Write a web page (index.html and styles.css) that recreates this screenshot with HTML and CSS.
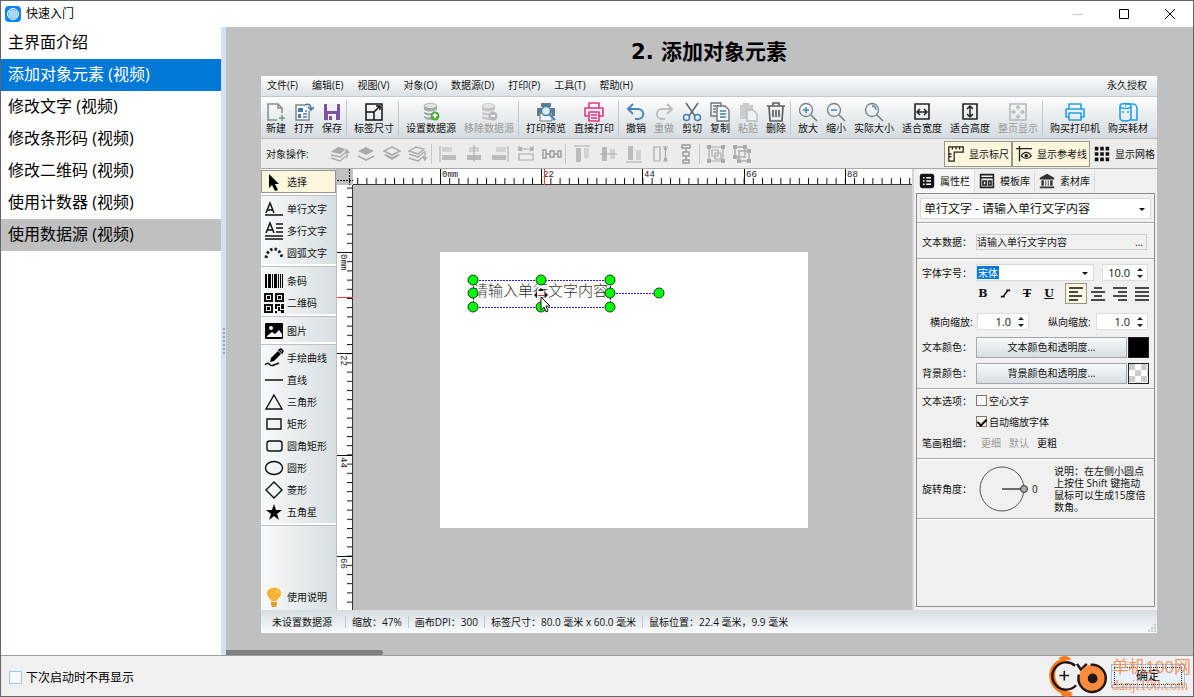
FILE: index.html
```html
<!DOCTYPE html>
<html lang="zh-CN">
<head>
<meta charset="utf-8">
<title>快速入门</title>
<link rel="stylesheet" href="styles.css">
</head>
<body>
<svg class="sprite" aria-hidden="true">
  <defs>
    <symbol id="new" viewBox="0 0 20 20"><path d="M11 18H2V2h10l4 4v5M12 2v4h4" fill="none" stroke="#8b8f92" stroke-width="1.6"/><path d="M16 13v6M13 16h6" stroke="#5f9f85" stroke-width="1.4"/></symbol>
    <symbol id="open" viewBox="0 0 20 20"><path d="M11 3H2v15h13V9" fill="#fff" stroke="#7d858b" stroke-width="1.5"/><path d="M4 6h5v4H4zM4 12h3v4H4z" fill="#3f7cb5"/><path d="M9 12h4M9 15h4M11 9h2" stroke="#3f7cb5" stroke-width="1.4"/><path d="M11 3c4-2 6 0 6 4M14 5l3 3 3-3" fill="none" stroke="#3f7cb5" stroke-width="1.6"/></symbol>
    <symbol id="save" viewBox="0 0 20 20"><path d="M2 2h16v16H2z" fill="#7e52a0"/><path d="M5 2h10v7H5zM6 12h8v6H6z" fill="#eef0f5"/><path d="M7 14h3v4H7z" fill="#7e52a0"/></symbol>
    <symbol id="size" viewBox="0 0 20 20"><path d="M2 2h16v16H2zM2 10h8v8M10 10l6-6M12 4h4v4" fill="none" stroke="#111" stroke-width="1.5"/></symbol>
    <symbol id="db" viewBox="0 0 20 20"><path d="M3 4v11c0 4 13 4 13 0V4z" fill="#a9adb0"/><path d="M3 8c0 3 13 3 13 0M3 12c0 3 13 3 13 0" stroke="#fff" stroke-width="1.4" fill="none"/><ellipse cx="9.500" cy="4" rx="6.500" ry="2.600" fill="#e0e2e4" stroke="#888" stroke-width=".6"/><circle cx="14" cy="14" r="4.500" fill="#51af3a"/><path d="M14 11l3 3h-2v2h-2v-2h-2z" fill="#fff"/></symbol>
    <symbol id="dboff" viewBox="0 0 20 20"><path d="M3 4v11c0 4 13 4 13 0V4z" fill="#c4c7ca"/><path d="M3 8c0 3 13 3 13 0M3 12c0 3 13 3 13 0" stroke="#f4f4f4" stroke-width="1.400" fill="none"/><ellipse cx="9.500" cy="4" rx="6.500" ry="2.600" fill="#e2e4e6" stroke="#bbb" stroke-width=".6"/><circle cx="14" cy="14" r="4.500" fill="#b5b8ba"/><path d="M12 14h4" stroke="#fff" stroke-width="1.600"/></symbol>
    <symbol id="preview" viewBox="0 0 20 20"><path d="M5 1h10v4H5zM1 6h18v8h-3v-3H4v3H1z" fill="#697983"/><path d="M4 11h12v8H4z" fill="#f5f8fa" stroke="#697983"/><circle cx="10" cy="9" r="4.500" fill="#d8ecfb" stroke="#3d86bd" stroke-width="1.500"/><path d="M13 12l6 6" stroke="#3d86bd" stroke-width="2"/></symbol>
    <symbol id="print" viewBox="0 0 20 20"><path d="M5 6V1h10v5M5 14H1V6h18v8h-4M5 10h10v9H5zM7 13h6M7 16h6" fill="none" stroke="currentColor" stroke-width="1.600" stroke-linejoin="round"/></symbol>
    <symbol id="undo" viewBox="0 0 20 20"><path d="M7 2L2 7l5 5M2 7h10c7 0 7 10 0 10H9" fill="none" stroke="#4b86ba" stroke-width="2"/></symbol>
    <symbol id="redo" viewBox="0 0 20 20"><path d="M13 2l5 5-5 5M18 7H8c-7 0-7 10 0 10h3" fill="none" stroke="#bbbfc1" stroke-width="2"/></symbol>
    <symbol id="cut" viewBox="0 0 20 20"><path d="M4 1l9 13M16 1L7 14" stroke="#5e666b" stroke-width="1.500"/><circle cx="4.500" cy="15.500" r="3" fill="none" stroke="#3e80b6" stroke-width="1.500"/><circle cx="15.500" cy="15.500" r="3" fill="none" stroke="#3e80b6" stroke-width="1.500"/></symbol>
    <symbol id="copy" viewBox="0 0 20 20"><path d="M7 14H1V1h10v3M3 4h5M3 7h3M3 10h3" fill="none" stroke="#6c7880" stroke-width="1.400"/><path d="M7 4h8l4 4v11H7z" fill="#f8fafb" stroke="#6c7880" stroke-width="1.400"/><path d="M10 9h6M10 12h6M10 15h6" stroke="#3e80b6" stroke-width="1.300"/></symbol>
    <symbol id="paste" viewBox="0 0 20 20"><path d="M2 3h13v14H2zM5 1h6v4H5z" fill="#c9cdd0"/><path d="M9 8h6l4 4v7H9z" fill="#f0f1f2" stroke="#b9bdc0" stroke-width="1.500"/></symbol>
    <symbol id="trash" viewBox="0 0 20 20"><path d="M1 4h18M7 4V1h6v3M3 4l1 15h12l1-15M7 8v7M10 8v7M13 8v7" fill="none" stroke="#5c6062" stroke-width="1.700"/></symbol>
    <symbol id="zin" viewBox="0 0 20 20"><circle cx="8" cy="8" r="6.500" fill="none" stroke="#777f84" stroke-width="1.300"/><path d="M13 13l6 6" stroke="#777f84" stroke-width="1.600"/><path d="M5 8h6M8 5v6" stroke="#3d86bd" stroke-width="1.500"/></symbol>
    <symbol id="zout" viewBox="0 0 20 20"><circle cx="8" cy="8" r="6.500" fill="none" stroke="#777f84" stroke-width="1.300"/><path d="M13 13l6 6" stroke="#777f84" stroke-width="1.600"/><path d="M5 8h6" stroke="#3d86bd" stroke-width="1.500"/></symbol>
    <symbol id="zreal" viewBox="0 0 20 20"><circle cx="8" cy="8" r="6.500" fill="none" stroke="#777f84" stroke-width="1.300"/><path d="M13 13l6 6" stroke="#777f84" stroke-width="1.600"/><path d="M8 4c3 0 4 2 4 4" fill="none" stroke="#3d86bd" stroke-width="1.400"/></symbol>
    <symbol id="fitw" viewBox="0 0 20 20"><path d="M3 2h14v15H3z" fill="none" stroke="#222" stroke-width="1.600"/><path d="M5 10h10M8 7l-3 3 3 3M12 7l3 3-3 3" fill="none" stroke="#222" stroke-width="1.500"/></symbol>
    <symbol id="fith" viewBox="0 0 20 20"><path d="M3 2h14v15H3z" fill="none" stroke="#222" stroke-width="1.600"/><path d="M10 4v11M7 7l3-3 3 3M7 12l3 3 3-3" fill="none" stroke="#222" stroke-width="1.500"/></symbol>
    <symbol id="fitp" viewBox="0 0 20 20"><path d="M2 2h16v16H2z" fill="none" stroke="#b4b8ba" stroke-width="1.500"/><path d="M10 4v4M10 12v4M4 10h4M12 10h4M8 6l2-2 2 2M8 14l2 2 2-2M6 8l-2 2 2 2M14 8l2 2-2 2" fill="none" stroke="#b4b8ba" stroke-width="1.300"/></symbol>
    <symbol id="printer" viewBox="0 0 20 20"><path d="M4 7V2h12v5M4 15H1V7h18v8h-3M4 11h12v7H4z" fill="none" stroke="#20a0e8" stroke-width="1.600" stroke-linejoin="round"/></symbol>
    <symbol id="roll" viewBox="0 0 20 20"><path d="M2 4v12c0 4 11 4 11 0V4M7 2h8c3 0 4 3 4 5v11h-6" fill="none" stroke="#20a0e8" stroke-width="1.600"/><ellipse cx="7.500" cy="4" rx="5.500" ry="2.500" fill="none" stroke="#20a0e8" stroke-width="1.500"/><path d="M7 4h1M4 10h2M9 10h2" stroke="#20a0e8" stroke-width="1.500"/></symbol>

    <symbol id="l1" viewBox="0 0 20 20"><path d="M1 8l7-5 8 2-6 5z" fill="#aaa"/><path d="M1 11l9 2 6-5M1 14l9 3 6-5M17 14V6m-2 3l2-3 2 3" fill="none" stroke="#aaa" stroke-width="1.400"/></symbol>
    <symbol id="l2" viewBox="0 0 20 20"><path d="M2 7l8-4 8 4-8 4z" fill="#aaa"/><path d="M2 12l8 4 8-4" fill="none" stroke="#aaa" stroke-width="1.600"/></symbol>
    <symbol id="l3" viewBox="0 0 20 20"><path d="M2 7l8-4 8 4-8 4z" fill="none" stroke="#aaa" stroke-width="1.500"/><path d="M2 11l8 5 8-5-2-1-6 3-6-3z" fill="#aaa"/></symbol>
    <symbol id="l4" viewBox="0 0 20 20"><path d="M1 7l7-4 8 2-6 5zM1 10l9 3 6-5M1 14l9 3 6-5" fill="none" stroke="#aaa" stroke-width="1.400"/><path d="M17 7v9m-2-3l2 3 2-3" stroke="#aaa" fill="none" stroke-width="1.300"/></symbol>
    <symbol id="al" viewBox="0 0 20 20"><path d="M2 2v16" stroke="#aaa"/><path d="M4 3h10v5H4z" fill="#d2d2d2"/><path d="M4 11h14v5H4z" fill="#bbb"/></symbol>
    <symbol id="ac" viewBox="0 0 20 20"><path d="M5 3h10v5H5z" fill="#d2d2d2"/><path d="M3 11h14v5H3z" fill="#bbb"/><path d="M10 1v17" stroke="#aaa"/></symbol>
    <symbol id="ar" viewBox="0 0 20 20"><path d="M18 2v16" stroke="#aaa"/><path d="M6 3h10v5H6z" fill="#d2d2d2"/><path d="M2 11h14v5H2z" fill="#bbb"/></symbol>
    <symbol id="sw" viewBox="0 0 20 20"><path d="M3 10h14v6H3zM3 2v5M17 2v5M3 5h14M6 3L3 5l3 2M14 3l3 2-3 2" fill="none" stroke="#aaa" stroke-width="1.200"/></symbol>
    <symbol id="sh" viewBox="0 0 20 20"><path d="M4 3h6v14H4zM13 3h5M13 17h5M15.500 3v14M14 6l1.500-3L17 6M14 14l1.500 3 1.500-3" fill="none" stroke="#aaa" stroke-width="1.200"/></symbol>
    <symbol id="dh" viewBox="0 0 20 20"><path d="M1 6h3v8H1zM8 7h4v6H8zM16 7h3v6h-3zM4 10h4M12 10h4" fill="none" stroke="#999" stroke-width="1.400"/></symbol>
    <symbol id="grp" viewBox="0 0 20 20"><path d="M3 3h14v14H3zM6 6h6v6H6zM9 9h6v6H9z" fill="none" stroke="#aaa" stroke-width="1.200"/><path d="M1 1h4v4H1zM15 1h4v4h-4zM1 15h4v4H1zM15 15h4v4h-4z" fill="#aaa"/></symbol>
    <symbol id="ugrp" viewBox="0 0 20 20"><path d="M3 3h10v10H3zM7 7h10v10H7z" fill="none" stroke="#aaa" stroke-width="1.400"/><path d="M1 1h4v4H1zM11 1h4v4h-4zM1 11h4v4H1zM15 5h4v4h-4zM5 15h4v4H5zM15 15h4v4h-4z" fill="#aaa"/></symbol>
    <symbol id="rul" viewBox="0 0 20 20"><path d="M2 2h16v6H8v10H2zM6 2v3M10 2v3M14 2v3M2 10h3M2 13h3" fill="none" stroke="#222" stroke-width="1.400"/></symbol>
    <symbol id="guide" viewBox="0 0 20 20"><path d="M1 4h18M5 1v17" stroke="#222" stroke-width="1.500"/><path d="M7 12c3-5 8-5 11 0-3 4-8 4-11 0z" fill="none" stroke="#222" stroke-width="1.300"/><circle cx="12.500" cy="12" r="2" fill="#222"/></symbol>
    <symbol id="grid" viewBox="0 0 20 20"><path d="M2 2h4v4H2zM8 2h4v4H8zM14 2h4v4h-4zM2 8h4v4H2zM8 8h4v4H8zM14 8h4v4h-4zM2 14h4v4H2zM8 14h4v4H8zM14 14h4v4h-4z" fill="#111"/></symbol>

    <symbol id="arrow" viewBox="0 0 20 20"><path d="M5 2v14l3-3 3 6 3-1-3-6h4z"/></symbol>
    <symbol id="tline" viewBox="0 0 20 20"><path d="M2 14L6 4l4 10M3.500 11h5" fill="none" stroke="#111" stroke-width="1.500"/><path d="M1 16h18" stroke="#111" stroke-width="1.500"/></symbol>
    <symbol id="tmulti" viewBox="0 0 20 20"><path d="M2 12L6 2l4 10M3 9h6M12 3h7M12 7h7M12 11h7M1 15h18M1 18h18" fill="none" stroke="#111" stroke-width="1.500"/></symbol>
    <symbol id="tarc" viewBox="0 0 20 20"><path d="M2 15C4 3 16 3 18 15" fill="none" stroke="#222" stroke-width="3" stroke-dasharray="2.500 2"/></symbol>
    <symbol id="bar" viewBox="0 0 20 20"><path d="M1 3h2v14H1zM4 3h3v14H4zM8 3h1v14H8zM10 3h3v14h-3zM14 3h1v14h-1zM16 3h1v14h-1zM18 3h1v14h-1z"/></symbol>
    <symbol id="qr" viewBox="0 0 20 20"><path d="M1 1h7v7H1zM12 1h7v7h-7zM1 12h7v7H1z" fill="none" stroke="#111" stroke-width="2"/><path d="M3 3h3v3H3zM14 3h3v3h-3zM3 14h3v3H3zM11 11h5v2h-3v3h-2zM17 11h3v5h-3zM14 14h2v3h4v3h-3v-2h-3zM11 18h2v2h-2z"/></symbol>
    <symbol id="img" viewBox="0 0 20 20"><rect x="1" y="2" width="18" height="16" rx="1"/><path d="M3 15l5-4 3 2 4-4 3 4v3H3z" fill="#f3f5f6"/><circle cx="7" cy="7" r="2" fill="#f3f5f6"/></symbol>
    <symbol id="pen" viewBox="0 0 20 20"><path d="M7 10l7-7 3 3-7 7-4 1z"/><path d="M15 2l2-1 2 2-1 2zM1 17c5-5 4 3 9 0l5-2" stroke="#111" stroke-width="1.500" fill="none"/></symbol>
    <symbol id="line" viewBox="0 0 20 20"><path d="M1 10h18" stroke="#111" stroke-width="1.500"/></symbol>
    <symbol id="tri" viewBox="0 0 20 20"><path d="M10 3l8 14H2z" fill="none" stroke="#111" stroke-width="1.400"/></symbol>
    <symbol id="rect" viewBox="0 0 20 20"><path d="M3 5h14v10H3z" fill="none" stroke="#111" stroke-width="1.400"/></symbol>
    <symbol id="rrect" viewBox="0 0 20 20"><rect x="3" y="5" width="15" height="10" rx="2.500" fill="none" stroke="#111" stroke-width="1.400"/></symbol>
    <symbol id="oval" viewBox="0 0 20 20"><ellipse cx="10" cy="10" rx="8.500" ry="6.500" fill="none" stroke="#111" stroke-width="1.400"/></symbol>
    <symbol id="dia" viewBox="0 0 20 20"><path d="M10 2l8 8-8 8-8-8z" fill="none" stroke="#111" stroke-width="1.400"/></symbol>
    <symbol id="star" viewBox="0 0 20 20"><path d="M10 2l2 6h6l-5 4 2 6-5-4-5 4 2-6-5-4h6z"/></symbol>
    <symbol id="bulb" viewBox="0 0 20 20"><path d="M7 14c0-3-4-3-4-8 0-7 14-7 14 0 0 5-4 5-4 8z" fill="#f9b233"/><path d="M7 15h6v2l-1 3H8l-1-3z" fill="#e39a2c"/><path d="M12 3c2 1 2 2 2 3" fill="none" stroke="#ffe3a4" stroke-width="1.200"/></symbol>

    <symbol id="props" viewBox="0 0 20 20"><rect x="1" y="1" width="18" height="18" rx="3" fill="#151515"/><path d="M5 6h2M5 10h2M5 14h2M9 6h6M9 10h6M9 14h6" stroke="#fff" stroke-width="2"/></symbol>
    <symbol id="tmpl" viewBox="0 0 20 20"><path d="M2 2h16v16H2zM2 6h16M5 10h4v5H5zM12 10h3v5h-3z" fill="none" stroke="#222" stroke-width="2"/></symbol>
    <symbol id="bank" viewBox="0 0 20 20"><path d="M10 1l9 5v2H1V6zM3 9h3v7H3zM8 9h1v7H8zM11 9h1v7h-1zM14 9h3v7h-3zM1 17h18v2H1z" fill="#333"/></symbol>
    <symbol id="updown" viewBox="0 0 6 12"><path d="M0 4l3-3 3 3zM0 8l3 3 3-3z" fill="#222"/></symbol>
  </defs>
</svg>

<div class="window">
  <header class="titlebar">
    <svg class="logo" viewBox="0 0 16 16"><rect width="16" height="16" rx="4" fill="#0a84f0"/><circle cx="8" cy="8" r="5.500" fill="#5fb0f7" stroke="#fff" stroke-width="1"/><path d="M5 5v6M7 4v8M9 4v8M11 5v6" stroke="#fff"/></svg>
    <span class="caption">快速入门</span>
    <button class="winbtn" aria-label="最小化"><svg viewBox="0 0 12 12"><path d="M1 6.500h10" stroke="#c8c8c8"/></svg></button>
    <button class="winbtn" aria-label="最大化"><svg viewBox="0 0 12 12"><path d="M1.500 1.500h9v9h-9z" fill="none" stroke="#000"/></svg></button>
    <button class="winbtn" aria-label="关闭"><svg viewBox="0 0 12 12"><path d="M1 1l10 10M11 1L1 11" stroke="#000"/></svg></button>
  </header>

  <div class="body">
    <nav class="topics">
      <a href="#">主界面介绍</a>
      <a href="#" class="current">添加对象元素 (视频)</a>
      <a href="#">修改文字 (视频)</a>
      <a href="#">修改条形码 (视频)</a>
      <a href="#">修改二维码 (视频)</a>
      <a href="#">使用计数器 (视频)</a>
      <a href="#" class="hover">使用数据源 (视频)</a>
    </nav>
    <div class="splitter"><i></i></div>

    <main class="stage">
      <h1>2. 添加对象元素</h1>
      <div class="app">
        <div class="menubar">
          <button>文件(F)</button><button>编辑(E)</button><button>视图(V)</button><button>对象(O)</button><button>数据源(D)</button><button>打印(P)</button><button>工具(T)</button><button>帮助(H)</button>
          <button class="license">永久授权</button>
        </div>

        <div class="toolbar">
          <button><svg><use href="#new"/></svg>新建</button>
          <button><svg><use href="#open"/></svg>打开</button>
          <button><svg><use href="#save"/></svg>保存</button>
          <i class="sep"></i>
          <button><svg><use href="#size"/></svg>标签尺寸</button>
          <i class="sep"></i>
          <button><svg><use href="#db"/></svg>设置数据源</button>
          <button disabled><svg><use href="#dboff"/></svg>移除数据源</button>
          <i class="sep"></i>
          <button><svg><use href="#preview"/></svg>打印预览</button>
          <button><svg class="pink"><use href="#print"/></svg>直接打印</button>
          <i class="sep"></i>
          <button><svg><use href="#undo"/></svg>撤销</button>
          <button disabled><svg><use href="#redo"/></svg>重做</button>
          <button><svg><use href="#cut"/></svg>剪切</button>
          <button><svg><use href="#copy"/></svg>复制</button>
          <button disabled><svg><use href="#paste"/></svg>粘贴</button>
          <button><svg><use href="#trash"/></svg>删除</button>
          <i class="sep"></i>
          <button><svg><use href="#zin"/></svg>放大</button>
          <button><svg><use href="#zout"/></svg>缩小</button>
          <button><svg><use href="#zreal"/></svg>实际大小</button>
          <button><svg><use href="#fitw"/></svg>适合宽度</button>
          <button><svg><use href="#fith"/></svg>适合高度</button>
          <button disabled><svg><use href="#fitp"/></svg>整页显示</button>
          <i class="sep"></i>
          <button><svg><use href="#printer"/></svg>购买打印机</button>
          <button><svg><use href="#roll"/></svg>购买耗材</button>
        </div>

        <div class="objectbar">
          <span class="oblabel">对象操作:</span>
          <button aria-label="置顶"><svg><use href="#l1"/></svg></button>
          <button aria-label="上移"><svg><use href="#l2"/></svg></button>
          <button aria-label="下移"><svg><use href="#l3"/></svg></button>
          <button aria-label="置底"><svg><use href="#l4"/></svg></button>
          <i class="sep"></i>
          <button aria-label="左对齐"><svg><use href="#al"/></svg></button>
          <button aria-label="水平居中"><svg><use href="#ac"/></svg></button>
          <button aria-label="右对齐"><svg><use href="#ar"/></svg></button>
          <button aria-label="等宽"><svg><use href="#sw"/></svg></button>
          <button aria-label="水平分布"><svg><use href="#dh"/></svg></button>
          <i class="sep"></i>
          <button aria-label="顶对齐"><svg class="turn"><use href="#al"/></svg></button>
          <button aria-label="垂直居中"><svg class="turn"><use href="#ac"/></svg></button>
          <button aria-label="底对齐"><svg class="turn"><use href="#ar"/></svg></button>
          <button aria-label="等高"><svg><use href="#sh"/></svg></button>
          <button aria-label="垂直分布"><svg class="turn"><use href="#dh"/></svg></button>
          <i class="sep"></i>
          <button aria-label="组合"><svg><use href="#grp"/></svg></button>
          <button aria-label="取消组合"><svg><use href="#ugrp"/></svg></button>
          <div class="toggles">
            <button class="on"><svg><use href="#rul"/></svg>显示标尺</button>
            <button class="on"><svg><use href="#guide"/></svg>显示参考线</button>
            <button class="last"><svg><use href="#grid"/></svg>显示网格</button>
          </div>
        </div>

        <div class="work">
          <div class="tools">
            <button class="picked"><svg><use href="#arrow"/></svg>选择</button>
            <i></i>
            <button><svg><use href="#tline"/></svg>单行文字</button>
            <button><svg><use href="#tmulti"/></svg>多行文字</button>
            <button><svg><use href="#tarc"/></svg>圆弧文字</button>
            <i class="tall"></i>
            <button><svg><use href="#bar"/></svg>条码</button>
            <button><svg><use href="#qr"/></svg>二维码</button>
            <i class="tall"></i>
            <button><svg><use href="#img"/></svg>图片</button>
            <i></i>
            <button><svg><use href="#pen"/></svg>手绘曲线</button>
            <button><svg><use href="#line"/></svg>直线</button>
            <button><svg><use href="#tri"/></svg>三角形</button>
            <button><svg><use href="#rect"/></svg>矩形</button>
            <button><svg><use href="#rrect"/></svg>圆角矩形</button>
            <button><svg><use href="#oval"/></svg>圆形</button>
            <button><svg><use href="#dia"/></svg>菱形</button>
            <button><svg><use href="#star"/></svg>五角星</button>
            <i class="tall"></i>
            <button class="help"><svg><use href="#bulb"/></svg>使用说明</button>
          </div>

          <div class="board">
            <svg class="corner"><path d="M0 11.500h16M12.500 0v16" stroke="#111" stroke-dasharray="2 1"/></svg>
            <svg class="hruler">
              <defs><pattern id="ht" x="87" width="9.200" height="16" patternUnits="userSpaceOnUse"><path d="M.5 9v7" stroke="#111"/></pattern></defs>
              <rect width="100%" height="16" fill="#fff"/>
              <rect width="100%" height="16" fill="url(#ht)"/>
              <path d="M87.500 0v16M188.500 0v16M289.500 0v16M391.500 0v16M492.500 0v16" stroke="#111"/>
              <rect y="15" width="100%" height="1" fill="#333"/>
              <text x="89" y="8">0mm</text><text x="190" y="8">22</text><text x="291" y="8">44</text><text x="393" y="8">66</text><text x="494" y="8">88</text>
              <path d="M191.500 0v16" stroke="#f33"/>
            </svg>
            <svg class="vruler">
              <defs><pattern id="vt" y="67" width="16" height="9.200" patternUnits="userSpaceOnUse"><path d="M10 .5h6" stroke="#111"/></pattern></defs>
              <rect width="16" height="100%" fill="#fff"/>
              <rect width="16" height="100%" fill="url(#vt)"/>
              <path d="M0 67.500h16M0 168.500h16M0 270.500h16M0 371.500h16" stroke="#111"/>
              <rect x="15" width="1" height="100%" fill="#333"/>
              <text transform="translate(4 69) rotate(90)">0mm</text><text transform="translate(4 170) rotate(90)">22</text><text transform="translate(4 272) rotate(90)">44</text><text transform="translate(4 373) rotate(90)">66</text>
              <path d="M0 112.500h16" stroke="#f33"/>
            </svg>
            <div class="canvas">
              <div class="label">
                <span class="sample">请输入单行文字内容</span>
                <svg class="selection" viewBox="0 0 220 50">
                  <path d="M13 13.500h137M13 40.500h137M13.500 13v27M150.500 13v27M150 26.500h48" fill="none" stroke="#2222dd" stroke-dasharray="2 1"/>
                  <g fill="#0f0" stroke="#154015"><circle cx="13" cy="13" r="5"/><circle cx="81" cy="13" r="5"/><circle cx="150" cy="13" r="5"/><circle cx="13" cy="26" r="5"/><circle cx="150" cy="26" r="5"/><circle cx="13" cy="40" r="5"/><circle cx="81" cy="40" r="5"/><circle cx="150" cy="40" r="5"/><circle cx="199" cy="26" r="5"/></g>
                  <path d="M74 28l3-3v6zM88 28l-3-3v6zM81 21l-3 3h6z" fill="#111"/>
                  <path d="M78 28.500h7" stroke="#e22"/>
                  <path d="M81 30v13l3-3 2 5 2-1-2-5h4z" fill="#fff" stroke="#111"/>
                </svg>
              </div>
            </div>
          </div>

          <aside class="panel">
            <div class="tabs">
              <button class="active"><svg><use href="#props"/></svg>属性栏</button>
              <button><svg><use href="#tmpl"/></svg>模板库</button>
              <button><svg><use href="#bank"/></svg>素材库</button>
            </div>
            <div class="props">
              <section class="pick">
                <span class="combo big"><select aria-label="对象"><option>单行文字 - 请输入单行文字内容</option></select></span>
              </section>
              <section class="data">
                <div class="row"><label for="txt">文本数据：</label><span class="field"><input id="txt" value="请输入单行文字内容"><button aria-label="更多">...</button></span></div>
              </section>
              <section class="font">
                <div class="row"><label for="fam">字体字号：</label><span class="combo fam"><select id="fam"><option>宋体</option></select></span><span class="spin size"><input aria-label="字号" value="10.0"><svg><use href="#updown"/></svg></span></div>
                <div class="row format">
                  <button class="b">B</button><button class="i" aria-label="斜体"><svg viewBox="0 0 14 14"><path d="M8 3h5M1 11h5M4 11l6-8" stroke="#111" stroke-width="2"/></svg></button><button class="s">T</button><button class="u">U</button>
                  <button class="al on" aria-label="左对齐"><svg viewBox="0 0 16 16"><path d="M1 2h14M1 6h9M1 10h13M1 14h9" stroke="#111" stroke-width="1.700"/></svg></button>
                  <button class="al" aria-label="居中"><svg viewBox="0 0 16 16"><path d="M4 2h8M1 6h14M4 10h8M1 14h14" stroke="#111" stroke-width="1.700"/></svg></button>
                  <button class="al" aria-label="右对齐"><svg viewBox="0 0 16 16"><path d="M1 2h14M6 6h9M1 10h14M6 14h9" stroke="#111" stroke-width="1.700"/></svg></button>
                  <button class="al" aria-label="两端对齐"><svg viewBox="0 0 16 16"><path d="M1 2h14M1 6h14M1 10h14M1 14h14" stroke="#111" stroke-width="1.700"/></svg></button>
                </div>
                <div class="row scale"><label for="sx">横向缩放:</label><span class="spin"><input id="sx" value="1.0"><svg><use href="#updown"/></svg></span><label for="sy" class="second">纵向缩放:</label><span class="spin"><input id="sy" value="1.0"><svg><use href="#updown"/></svg></span></div>
                <div class="row color"><span class="lab">文本颜色：</span><button class="wide">文本颜色和透明度...</button><i class="swatch"></i></div>
                <div class="row color"><span class="lab">背景颜色：</span><button class="wide">背景颜色和透明度...</button><i class="swatch clear"></i></div>
              </section>
              <section class="opts">
                <div class="row"><span class="lab">文本选项：</span><label class="tick"><input type="checkbox">空心文字</label></div>
                <div class="row"><span class="lab"></span><label class="tick"><input type="checkbox" checked>自动缩放字体</label></div>
                <div class="row weight"><span class="lab">笔画粗细：</span><button disabled>更细</button><button disabled>默认</button><button>更粗</button></div>
              </section>
              <section class="rotate">
                <div class="row"><span class="lab">旋转角度：</span>
                  <svg class="dial" viewBox="0 0 52 48"><circle cx="26" cy="24" r="22" fill="none" stroke="#555"/><path d="M26 24h20" stroke="#222" stroke-width="1.300"/><circle cx="48" cy="24" r="3.500" fill="#aaa" stroke="#333"/></svg>
                  <output>0</output>
                  <p>说明：在左侧小圆点上按住 Shift 键拖动鼠标可以生成15度倍数角。</p>
                </div>
              </section>
            </div>
          </aside>
        </div>

        <div class="status">
          <span class="src">未设置数据源</span><span>缩放：47%</span><span>画布DPI：300</span><span>标签尺寸：80.0 毫米 x 60.0 毫米</span><span>鼠标位置：22.4 毫米，9.9 毫米</span>
          <svg class="grip" viewBox="0 0 8 8"><path d="M6 1h2M3 4h2M6 4h2M0 7h2M3 7h2M6 7h2" stroke="#999"/></svg>
        </div>
      </div>
      <div class="scroll"></div>
    </main>
  </div>

  <footer class="footer">
    <label class="again"><input type="checkbox">下次启动时不再显示</label>
    <button class="ok">确定</button>
    <div class="mark">
      <svg viewBox="0 0 64 42"><path d="M20 2C-4 4-4 38 24 41l2-4C4 34 4 8 20 6z" fill="#ff7a1a"/><path d="M12 3c3-4 11-4 13 1-4 0-9 0-13-1zM14 39c3 4 10 4 13 0z" fill="#ff7a1a"/><path d="M30 30A14 14 0 1 1 29 10M31 8l4 6 6-6" fill="none" stroke="#201616" stroke-width="2.500"/><path d="M13 20h10M18 15v10" stroke="#201616" stroke-width="1.600"/><circle cx="47" cy="23" r="14" fill="#ff8c3c"/><path d="M45 9a14 14 0 1 1-12 10" fill="none" stroke="#201616" stroke-width="2.500"/><circle cx="47" cy="23" r="5" fill="#201616"/></svg>
      <div class="words"><b>单机100网</b><span>danji100.com</span></div>
    </div>
  </footer>
</div>
</body>
</html>
```
FILE: styles.css
```css
* { box-sizing: border-box; }
body {
  margin: 0;
  font: 12px/16px "Open Sans", "Noto Sans CJK SC", sans-serif;
  color: #111;
}
button, input, select {
  font: inherit;
  color: inherit;
  margin: 0;
  padding: 0;
  border: 0;
  border-radius: 0;
  background: none;
  appearance: none;
}
button { white-space: nowrap; }
svg { display: block; flex: none; }
.sprite { position: absolute; width: 0; height: 0; }

.window {
  display: flex;
  flex-direction: column;
  min-height: 100vh;
  border: 1px solid #62666c;
  background: #fff;
}
.titlebar { display: flex; align-items: center; height: 26px; padding-left: 4px; }
.logo { width: 16px; height: 16px; margin-right: 5px; }
.caption { flex: 1; color: #000; }
.winbtn { width: 46px; height: 24px; display: grid; place-items: center; }
.winbtn svg { width: 12px; height: 12px; }

.body { flex: 1; display: flex; }
.topics { width: 220px; flex: none; background: #fff; }
.topics a {
  display: block;
  padding: 0 7px 2px;
  font-size: 16px;
  line-height: 30px;
  color: #000;
  text-decoration: none;
}
.topics .current { background: #0078d7; color: #fff; }
.topics .hover { background: #c0c0c0; }
.splitter { width: 5px; display: grid; place-items: center; background: #d3e0f3; }
.splitter i { width: 2px; height: 27px; background: repeating-linear-gradient(#8fa6c8 0 2px, transparent 2px 4px); }

.stage {
  flex: 1;
  min-width: 0;
  display: flex;
  flex-direction: column;
  padding: 0 36px 0 35px;
  background: #c0c0c0;
  position: relative;
}
h1 {
  margin: 0;
  padding-top: 9px;
  font: bold 21px/32px "DejaVu Sans", "Noto Sans CJK SC", sans-serif;
  height: 49px;
  text-align: center;
  color: #000;
}
.scroll { position: absolute; left: 0; bottom: 0; width: 157px; height: 5px; background: #808080; border-radius: 0 3px 3px 0; }

.app {
  flex: 1;
  display: flex;
  flex-direction: column;
  margin-bottom: 22px;
  background: #f0f0f0;
  font-size: 10px;
  line-height: 12px;
}
.menubar {
  display: flex;
  align-items: center;
  gap: 14px;
  height: 21px;
  padding: 0 10px 2px 6px;
  background: linear-gradient(#fcfdfd, #dbe1e5);
  border-bottom: 1px solid #c3c8cb;
}
.license { margin-left: auto; }
.toolbar {
  display: flex;
  height: 42px;
  padding: 4px 0 0 1px;
  background: linear-gradient(#fcfdfe, #d4dbe0);
  border-bottom: 1px solid #b8bdc1;
}
.toolbar button { padding: 0 4px; height: 34px; flex: none; }
.toolbar svg { width: 20px; height: 20px; margin: 0 auto; }
.toolbar button:disabled { color: #999; }
.pink { color: #e3357f; }
.sep { flex: none; width: 4px; height: 34px; border-left: 1px solid #c2c6c9; }
.objectbar { display: flex; align-items: center; height: 30px; padding-left: 5px; background: #ececec; border-bottom: 1px solid #a8abad; }
.oblabel { width: 61px; }
.objectbar > button { width: 26px; height: 24px; display: grid; place-items: center; }
.objectbar > button svg { width: 20px; height: 20px; }
.objectbar .sep { height: 20px; }
.turn { transform: rotate(90deg); }
.toggles { display: flex; margin-left: auto; padding-right: 2px; }
.toggles button { display: flex; align-items: center; gap: 4px; height: 26px; padding: 0 2px; border: 1px solid transparent; }
.toggles .on { background: #fcf6dc; border-color: #96958a; }
.toggles .last { padding-right: 0; border-right: 0; }
.toggles svg { width: 18px; height: 18px; }

.work { flex: 1; display: grid; grid-template-columns: 76px 1fr 245px; }
.tools { display: flex; flex-direction: column; padding-top: 1px; background: linear-gradient(90deg, #f8fafa, #d7dee2); border-right: 1px solid #b9bec2; }
.tools button { display: flex; align-items: center; gap: 3px; height: 22px; padding-left: 3px; }
.tools svg { width: 20px; height: 20px; }
.tools i { height: 5px; flex: none; border-top: 2px solid #fff; box-shadow: inset 0 1px #bcc1c4; }
.tools .tall { height: 6px; }
.tools .picked { height: 23px; background: #fcf6dc; border: 1px solid #96958a; padding-left: 2px; }
.tools .help { margin: auto 0 2px; }

.board { display: grid; grid-template: 16px 1fr / 16px 1fr; min-width: 0; background: #c0c0c0; }
.board text { font: 9px "Liberation Mono", monospace; fill: #222; }
.corner { width: 16px; height: 16px; }
.hruler { width: 100%; height: 16px; }
.vruler { width: 16px; height: 100%; }
.canvas { position: relative; }
.label { position: absolute; left: 87px; top: 67px; width: 368px; height: 276px; background: #fff; }
.sample { position: absolute; left: 33px; top: 29px; font: 15px/20px "Liberation Serif", "Noto Sans CJK SC", serif; font-weight: 300; color: #333; white-space: nowrap; }
.selection { position: absolute; left: 20px; top: 15px; width: 220px; height: 50px; }

.panel { display: flex; flex-direction: column; padding: 0 2px 3px 3px; background: #f0f0f0; border-left: 2px solid #d5d5d5; }
.tabs { display: flex; height: 24px; align-items: center; padding-left: 2px; }
.tabs button { display: flex; align-items: center; gap: 5px; height: 23px; padding: 0 4px 0 4px; border-right: 1px solid #ddd; }
.tabs svg { width: 16px; height: 16px; }
.tabs .active { background: #f8f8f8; padding-left: 0; }
.props { flex: 1; border: 1px solid #8c8c8c; margin-left: -1px; background: #f0f0f0; }
.props section { border-bottom: 1px solid #a9a9a9; box-shadow: 0 1px #fff; }
.row { display: flex; align-items: center; padding: 0 5px; }
.row > label:first-child, .lab { flex: none; width: 54px; white-space: nowrap; }

.combo { display: flex; position: relative; background: #fff; border: 1px solid #d8d8d8; }
.combo::after { content: ""; position: absolute; right: 5px; top: 50%; margin-top: -1px; border: 3px solid transparent; border-top-color: #111; }
.combo select { width: 100%; height: 100%; padding-left: 3px; }
.pick { padding: 4px 3px 3px; }
.big { height: 21px; font-size: 12px; }
.data { padding: 11px 0 8px; }
.field { display: flex; flex: 1; height: 16px; margin-right: 2px; border: 1px solid #ccc; }
.field input { flex: 1; min-width: 0; }
.field button { padding: 0 3px; }
.font { padding: 5px 0 0; }
.fam { width: 118px; height: 17px; }
.fam select { padding-left: 1px; color: #fff; background: linear-gradient(#0078d7, #0078d7) 0 1px / 22px 13px no-repeat; }
.spin { display: flex; align-items: center; width: 52px; height: 17px; padding-right: 4px; background: #fff; border: 1px solid #ddd; }
.spin input { flex: 1; min-width: 0; text-align: right; padding-right: 7px; font-size: 11px; }
.spin svg { width: 6px; height: 12px; }
.size { width: 46px; margin-left: 8px; }
.format { padding: 2px 3px 3px 55px; font: bold 11px/14px "DejaVu Serif", serif; }
.format button { width: 22px; height: 21px; display: grid; place-items: center; flex: none; }
.format .i svg { width: 11px; height: 11px; }
.format .s { text-decoration: line-through; }
.format .u { text-decoration: underline; margin-right: 5px; }
.format .al { border: 1px solid transparent; }
.format .al svg { width: 16px; height: 16px; }
.format .on { background: #fcf6dc; border-color: #96958a; }
.scale { padding-top: 6px; height: 23px; margin-bottom: 6px; }
.scale > label:first-child { padding-left: 8px; width: 55px; }
.scale .second { width: 67px; padding-left: 19px; white-space: nowrap; }
.color { height: 22px; margin-bottom: 4px; }
.wide { flex: 1; height: 21px; border: 1px solid #a2a8ac; background: linear-gradient(#f7f9fa, #d6dde1); }
.swatch { width: 21px; height: 21px; margin-left: 1px; border: 1px solid #222; background: #000; }
.clear { background: repeating-conic-gradient(#fff 0 25%, #ccc 0 50%) 0 0 / 12px 12px; }
.opts { padding: 1px 0 5px; }
.opts .row { height: 21px; }
.tick { display: flex; align-items: center; gap: 2px; }
.tick input { display: grid; place-items: center; width: 11px; height: 11px; border: 1px solid #777; background: #f6f6f6; }
.tick input:checked { background: #fcf6dc; }
.tick input:checked::before { content: ""; width: 4px; height: 7px; border: solid #000; border-width: 0 2px 2px 0; transform: rotate(45deg); }
.weight { gap: 8px; }
.weight .lab { width: 51px; }
.weight button:disabled { color: #999; }
.rotate { padding: 5px 0 4px; }
.dial { width: 52px; height: 50px; }
.rotate output { width: 26px; padding-left: 4px; }
.rotate p { margin: 0; flex: 1; line-height: 12px; }
.rotate .row { padding-right: 5px; }

.status { display: flex; align-items: center; height: 23px; padding-left: 5px; background: linear-gradient(#d5dde1, #fbfcfd); }
.status span { padding: 0 6px; border-left: 1px solid #c2c7ca; }
.status .src { border: 0; padding-right: 13px; }
.grip { width: 8px; height: 8px; margin: auto 1px 1px auto; }

.footer { display: flex; align-items: center; justify-content: space-between; height: 41px; padding: 0 8px; background: #f0f0f0; border-top: 1px solid #a0a0a0; position: relative; color: #000; }
.again { display: flex; align-items: center; gap: 4px; padding-top: 3px; }
.again input { width: 13px; height: 13px; border: 1px solid #a3c4ee; background: #f6f9fd; }
.ok { width: 74px; height: 24px; border: 1px solid #9cc0ea; background: #e9f1fc; outline: 1px dotted #222; outline-offset: -4px; }
.mark { position: absolute; right: 2px; top: 0; display: flex; gap: 2px; pointer-events: none; }
.mark svg { width: 64px; height: 41px; }
.words { display: flex; flex-direction: column; color: #f08a4c; padding-top: 2px; opacity: .85; }
.words b { font: 17px/19px "Liberation Sans", "Noto Sans CJK SC", sans-serif; }
.words span { font: 14px/18px "Liberation Serif", serif; }
```
